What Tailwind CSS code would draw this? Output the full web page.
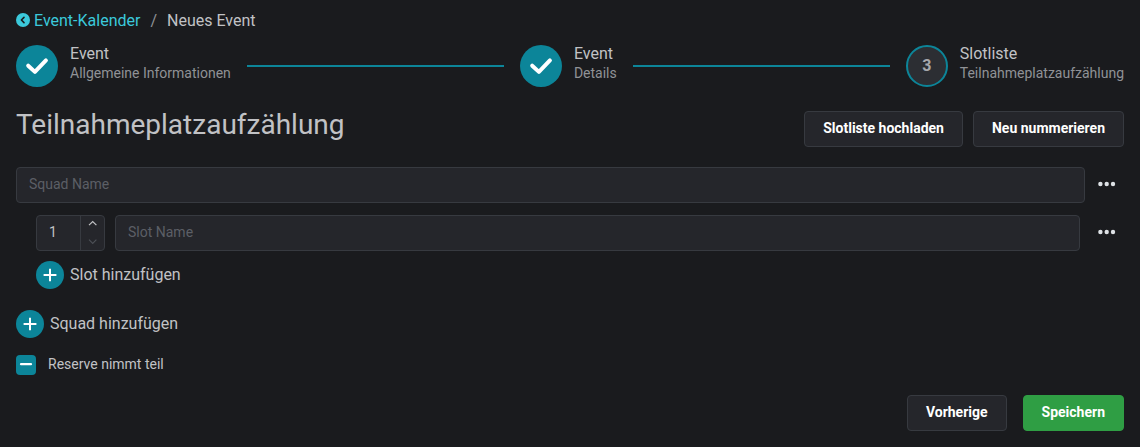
<!DOCTYPE html>
<html lang="de">
<head>
<meta charset="utf-8">
<title>Neues Event</title>
<script src="https://cdn.jsdelivr.net/npm/@tailwindcss/browser@4"></script>
</head>
<body class="h-[447px] overflow-hidden bg-[#1a1b1e] px-4 font-['Roboto',sans-serif] text-base text-[#c1c2c5]">
  <nav class="flex h-[45px] items-start pt-2 leading-[25px]">
    <a class="flex items-center text-[#3bc9db]"><svg class="mr-1 mb-px size-3.5" viewBox="0 0 14 14"><circle cx="7" cy="7" r="7" fill="#3bc9db"/><path d="M8 4.4 5.4 7 8 9.6" fill="none" stroke="#1a1b1e" stroke-width="1.6" stroke-linecap="round" stroke-linejoin="round"/></svg>Event-Kalender</a>
    <span class="mx-2.5 text-[#909296]">/</span>
    <span>Neues Event</span>
  </nav>
  <div class="flex h-[42px] items-center">
    <div class="flex items-center">
      <div class="mr-3 flex size-[42px] items-center justify-center rounded-full bg-[#0c8599]"><svg class="h-[18px] w-6" viewBox="0 0 24 18"><path d="M3.2 8.7 9.9 14.9 20.9 3.4" fill="none" stroke="#fff" stroke-width="4" stroke-linecap="round" stroke-linejoin="round"/></svg></div>
      <div class="-mt-1.5"><div class="leading-4">Event</div><div class="mt-1 text-sm leading-[14px] text-[#909296]">Allgemeine Informationen</div></div>
    </div>
    <div class="mx-4 h-0.5 flex-1 bg-[#0c8599]"></div>
    <div class="flex items-center">
      <div class="mr-3 flex size-[42px] items-center justify-center rounded-full bg-[#0c8599]"><svg class="h-[18px] w-6" viewBox="0 0 24 18"><path d="M3.2 8.7 9.9 14.9 20.9 3.4" fill="none" stroke="#fff" stroke-width="4" stroke-linecap="round" stroke-linejoin="round"/></svg></div>
      <div class="-mt-1.5"><div class="leading-4">Event</div><div class="mt-1 text-sm leading-[14px] text-[#909296]">Details</div></div>
    </div>
    <div class="mx-4 h-0.5 flex-1 bg-[#0c8599]"></div>
    <div class="flex items-center">
      <div class="mr-3 flex size-[42px] items-center justify-center rounded-full border-2 border-[#0c8599] bg-[#2c2e33] font-bold text-[#a6a7ab]">3</div>
      <div class="-mt-1.5"><div class="leading-4">Slotliste</div><div class="mt-1 text-sm leading-[14px] text-[#909296]">Teilnahmeplatzaufzählung</div></div>
    </div>
  </div>
  <div class="mt-6 flex items-start justify-between">
    <h1 class="-mt-1 text-[28px] leading-9">Teilnahmeplatzaufzählung</h1>
    <div class="flex gap-2.5 text-sm font-bold text-white">
      <button class="h-9 rounded border border-[#373a40] bg-[#25262b] px-[18px] pb-0.5">Slotliste hochladen</button>
      <button class="h-9 rounded border border-[#373a40] bg-[#25262b] px-[18px] pb-0.5">Neu nummerieren</button>
    </div>
  </div>
  <div class="mt-5 flex items-center">
    <input class="h-9 w-[1069px] rounded border border-[#373a40] bg-[#25262b] px-3 pb-0.5 text-sm placeholder:text-[#5c5f66]" placeholder="Squad Name">
    <svg class="ml-3 h-5 w-5" viewBox="0 0 20 20" fill="#dee2e6"><circle cx="3.4" cy="9" r="2.2"/><circle cx="9.7" cy="9" r="2.2"/><circle cx="16" cy="9" r="2.2"/></svg>
  </div>
  <div class="mt-3 flex items-center pl-5">
    <div class="flex h-9 w-[69px] overflow-hidden rounded border border-[#373a40] bg-[#25262b]">
      <span class="flex-1 pl-3 text-sm leading-8">1</span>
      <div class="flex w-6 flex-col border-l border-[#373a40]">
        <svg class="h-[17px] w-6" viewBox="0 0 24 17" fill="none" stroke="#c1c2c5" stroke-width="1.2"><path d="M8 9.2 11.7 5.5 15.4 9.2"/></svg>
        <svg class="h-[17px] w-6" viewBox="0 0 24 17" fill="none" stroke="#4c4f55" stroke-width="1.2"><path d="M8 6.7 11.7 10.4 15.4 6.7"/></svg>
      </div>
    </div>
    <input class="ml-2.5 h-9 w-[965px] rounded border border-[#373a40] bg-[#25262b] px-3 pb-0.5 text-sm placeholder:text-[#5c5f66]" placeholder="Slot Name">
    <svg class="ml-[17px] h-5 w-5" viewBox="0 0 20 20" fill="#dee2e6"><circle cx="3.4" cy="9" r="2.2"/><circle cx="9.7" cy="9" r="2.2"/><circle cx="16" cy="9" r="2.2"/></svg>
  </div>
  <div class="mt-2.5 flex h-7 items-center gap-1.5 pl-5">
    <svg class="size-7" viewBox="0 0 28 28"><circle cx="14" cy="14" r="14" fill="#0c8599"/><path d="M14 7.8v12.5M7.6 14h12.8" stroke="#fff" stroke-width="2"/></svg>
    <span class="leading-[26px]">Slot hinzufügen</span>
  </div>
  <div class="mt-[21px] flex h-7 items-center gap-1.5">
    <svg class="size-7" viewBox="0 0 28 28"><circle cx="14" cy="14" r="14" fill="#0c8599"/><path d="M14 7.8v12.5M7.6 14h12.8" stroke="#fff" stroke-width="2"/></svg>
    <span class="leading-[26px]">Squad hinzufügen</span>
  </div>
  <div class="mt-[17px] flex h-5 items-center gap-3">
    <svg class="size-5" viewBox="0 0 20 20"><rect width="20" height="20" rx="4" fill="#0c8599"/><path d="M5 9.2h10" stroke="#fff" stroke-width="2.2" stroke-linecap="round"/></svg>
    <span class="pb-0.5 text-sm leading-[18px]">Reserve nimmt teil</span>
  </div>
  <div class="mt-5 flex justify-end gap-4 text-sm font-bold text-white">
    <button class="h-9 rounded border border-[#373a40] bg-[#25262b] px-[18px] pb-0.5">Vorherige</button>
    <button class="h-9 rounded border border-[#2f9e44] bg-[#2f9e44] px-[18px] pb-0.5">Speichern</button>
  </div>
</body>
</html>
